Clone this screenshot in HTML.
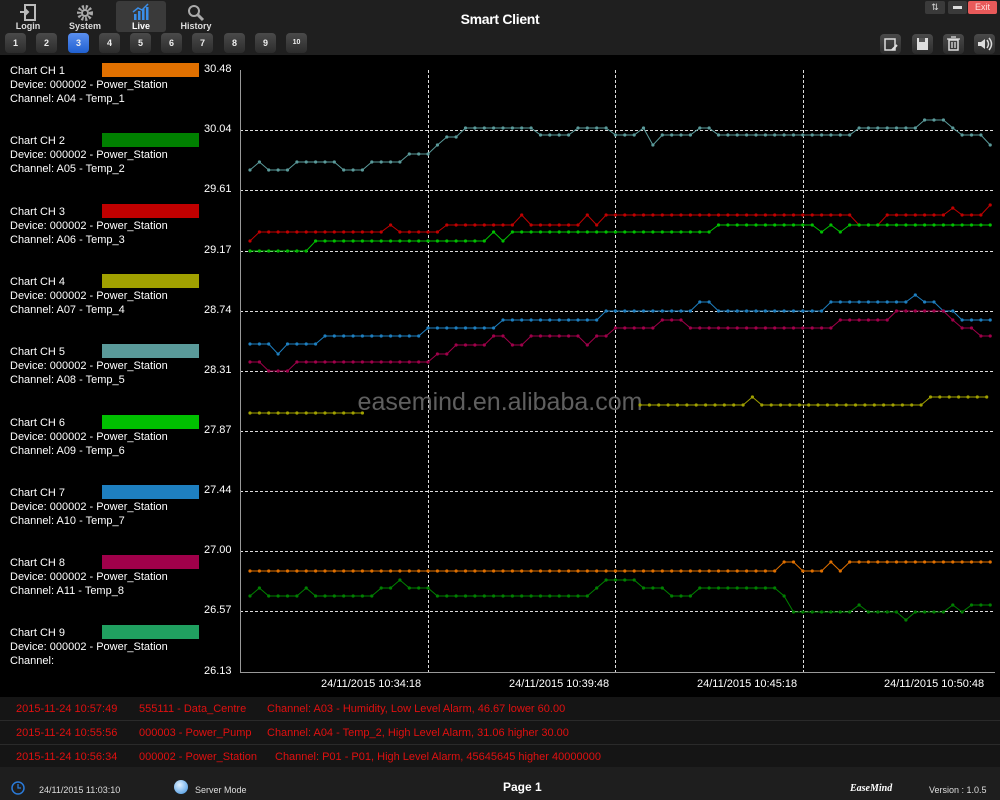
<!DOCTYPE html>
<html><head><meta charset="utf-8"><style>
*{margin:0;padding:0;box-sizing:border-box}
body{width:1000px;height:800px;background:#000;font-family:"Liberation Sans",sans-serif;position:relative;overflow:hidden;color:#fff}
.top{position:absolute;left:0;top:0;width:1000px;height:55px;background:#1f1f1f}
.nav{position:absolute;top:2px;width:50px;height:30px;text-align:center;font-size:9px;font-weight:bold;color:#ddd}
.nav span{position:absolute;left:0;right:0;bottom:1px}
.nb{position:absolute;top:33px;width:21px;height:20px;border-radius:4px;background:linear-gradient(#4a4a4a,#2c2c2c);font-size:9px;font-weight:bold;color:#eee;text-align:center;line-height:20px}
.tb{position:absolute;top:34px;width:21px;height:20px;border-radius:4px;background:linear-gradient(#4a4a4a,#2c2c2c)}
.leg{position:absolute;left:10px;font-size:11px;line-height:14px;color:#fff}
.bar{position:absolute;left:102px;width:97px;height:14px}
.yl{position:absolute;left:204px;font-size:11px;color:#fff}
.xl{position:absolute;top:678px;font-size:11px;color:#fff}
.al{position:absolute;left:0;width:1000px;height:24px;font-size:11px;color:#e01010;line-height:24px;border-bottom:1px solid #2a2a2a;background:#151515}
.al span{position:absolute}
.foot{position:absolute;left:0;top:767px;width:1000px;height:33px;background:#1e1e1e;font-size:9px;color:#ddd}
</style></head><body>
<div class="top">
 <div class="nav" style="left:3px"><svg width="20" height="18" viewBox="0 0 20 18" style="margin-top:2px"><rect x="7" y="1" width="10" height="15" fill="none" stroke="#bbb" stroke-width="2"/><path d="M2 8h8M7 5l3 3-3 3" stroke="#bbb" stroke-width="2" fill="none"/></svg><span>Login</span></div>
 <div class="nav" style="left:60px"><svg width="20" height="18" style="margin-top:2px"><circle cx="10" cy="9" r="6" fill="none" stroke="#aaa" stroke-width="4" stroke-dasharray="2 1.6"/><circle cx="10" cy="9" r="4" fill="#aaa"/><circle cx="10" cy="9" r="2" fill="#1f1f1f"/></svg><span>System</span></div>
 <div class="nav" style="left:116px;top:1px;height:31px;background:#3a3a3a;border-radius:3px"><svg width="20" height="18" style="margin-top:2px"><rect x="3" y="11" width="2.5" height="6" fill="#3a8ee8"/><rect x="7" y="8" width="2.5" height="9" fill="#3a8ee8"/><rect x="11" y="6" width="2.5" height="11" fill="#3a8ee8"/><rect x="15" y="4" width="2.5" height="13" fill="#3a8ee8"/><path d="M2 9l5-4 4 2 6-6" stroke="#3a8ee8" stroke-width="1.5" fill="none"/></svg><span style="color:#fff">Live</span></div>
 <div class="nav" style="left:171px"><svg width="20" height="18" style="margin-top:2px"><circle cx="8" cy="7" r="5" fill="none" stroke="#aaa" stroke-width="2"/><path d="M12 11l5 5" stroke="#aaa" stroke-width="3"/></svg><span>History</span></div>
 <div style="position:absolute;left:0;width:1000px;top:11px;text-align:center;font-size:14px;font-weight:bold;color:#fff;letter-spacing:-0.3px">Smart Client</div>
 <div style="position:absolute;left:925px;top:1px;width:20px;height:13px;background:#3a3a3a;border-radius:2px;font-size:9px;text-align:center;line-height:13px;color:#ddd">⇅</div>
 <div style="position:absolute;left:948px;top:1px;width:19px;height:13px;background:#3a3a3a;border-radius:2px"><div style="margin:5px 5px;height:3px;background:#ddd"></div></div>
 <div style="position:absolute;left:968px;top:1px;width:29px;height:13px;background:#e85a5a;border-radius:2px;font-size:9px;text-align:center;line-height:13px;color:#fdd">Exit</div>
 <div class="nb" style="left:5px">1</div><div class="nb" style="left:36px">2</div><div class="nb" style="left:68px;background:linear-gradient(#5a8ff0,#2060d0)">3</div><div class="nb" style="left:99px">4</div><div class="nb" style="left:130px">5</div><div class="nb" style="left:161px">6</div><div class="nb" style="left:192px">7</div><div class="nb" style="left:224px">8</div><div class="nb" style="left:255px">9</div><div class="nb" style="left:286px;font-size:7px">10</div>
 <div class="tb" style="left:880px"><svg width="21" height="20"><rect x="5" y="5" width="10" height="11" fill="none" stroke="#ddd" stroke-width="1.5"/><path d="M12 16l5-5" stroke="#ddd" stroke-width="2"/></svg></div>
 <div class="tb" style="left:912px"><svg width="21" height="20"><rect x="5" y="4" width="11" height="12" fill="#ddd"/><rect x="7" y="4" width="6" height="4" fill="#555"/></svg></div>
 <div class="tb" style="left:943px"><svg width="21" height="20"><rect x="6" y="6" width="9" height="10" fill="none" stroke="#ddd" stroke-width="1.5"/><path d="M4 5h13M8 3h5M9 8v6M12 8v6" stroke="#ddd" stroke-width="1.3"/></svg></div>
 <div class="tb" style="left:974px"><svg width="21" height="20"><path d="M4 8h3l4-3v10l-4-3H4z" fill="#ddd"/><path d="M13 6q3 4 0 8M15 4q5 6 0 12" stroke="#ddd" stroke-width="1.5" fill="none"/></svg></div>
</div>

<div id="legend"></div>
<div class="yl" style="top:63px">30.48</div><div class="yl" style="top:123px">30.04</div><div class="yl" style="top:183px">29.61</div><div class="yl" style="top:244px">29.17</div><div class="yl" style="top:304px">28.74</div><div class="yl" style="top:364px">28.31</div><div class="yl" style="top:424px">27.87</div><div class="yl" style="top:484px">27.44</div><div class="yl" style="top:544px">27.00</div><div class="yl" style="top:604px">26.57</div><div class="yl" style="top:665px">26.13</div>
<div class="xl" style="left:321px">24/11/2015 10:34:18</div><div class="xl" style="left:509px">24/11/2015 10:39:48</div><div class="xl" style="left:697px">24/11/2015 10:45:18</div><div class="xl" style="left:884px">24/11/2015 10:50:48</div>
<svg id="ch" width="1000" height="800" style="position:absolute;left:0;top:0">
<g stroke="#ddd" stroke-width="1" stroke-dasharray="3 2">
<line x1="240" y1="130.5" x2="995" y2="130.5"/><line x1="240" y1="190.5" x2="995" y2="190.5"/><line x1="240" y1="251.5" x2="995" y2="251.5"/><line x1="240" y1="311.5" x2="995" y2="311.5"/><line x1="240" y1="371.5" x2="995" y2="371.5"/><line x1="240" y1="431.5" x2="995" y2="431.5"/><line x1="240" y1="491.5" x2="995" y2="491.5"/><line x1="240" y1="551.5" x2="995" y2="551.5"/><line x1="240" y1="611.5" x2="995" y2="611.5"/>
<line x1="428.5" y1="70" x2="428.5" y2="672"/><line x1="615.5" y1="70" x2="615.5" y2="672"/><line x1="803.5" y1="70" x2="803.5" y2="672"/>
</g>
<line x1="240.5" y1="70" x2="240.5" y2="673" stroke="#999"/>
<line x1="240" y1="672.5" x2="995" y2="672.5" stroke="#999"/>
<text x="500" y="410" font-size="25" fill="#777" fill-opacity="0.8" text-anchor="middle" font-family="Liberation Sans">easemind.en.alibaba.com</text>
<g id="ser"></g>
</svg>
<div class="al" style="top:697px"><span style="left:16px">2015-11-24 10:57:49</span><span style="left:139px">555111 - Data_Centre</span><span style="left:267px">Channel: A03 - Humidity, Low Level Alarm, 46.67 lower 60.00</span></div>
<div class="al" style="top:721px"><span style="left:16px">2015-11-24 10:55:56</span><span style="left:139px">000003 - Power_Pump</span><span style="left:267px">Channel: A04 - Temp_2, High Level Alarm, 31.06 higher 30.00</span></div>
<div class="al" style="top:745px"><span style="left:16px">2015-11-24 10:56:34</span><span style="left:139px">000002 - Power_Station</span><span style="left:275px">Channel: P01 - P01, High Level Alarm, 45645645 higher 40000000</span></div>
<div class="foot">
 <svg width="16" height="16" style="position:absolute;left:10px;top:13px"><circle cx="8" cy="8" r="6" fill="none" stroke="#2a7ad8" stroke-width="1.5"/><path d="M8 4v4h3" stroke="#2a7ad8" stroke-width="1.3" fill="none"/></svg>
 <span style="position:absolute;left:39px;top:18px">24/11/2015 11:03:10</span>
 <div style="position:absolute;left:174px;top:13px;width:14px;height:14px;border-radius:50%;background:radial-gradient(circle at 40% 35%,#e0f0ff,#3a90e0)"></div>
 <span style="position:absolute;left:195px;top:18px">Server Mode</span>
 <span style="position:absolute;left:503px;top:13px;font-size:12px;font-weight:bold;color:#fff">Page 1</span>
 <span style="position:absolute;left:850px;top:16px;font-size:10px;font-style:italic;font-weight:bold;color:#fff;font-family:'Liberation Serif',serif">EaseMind</span>
 <span style="position:absolute;left:929px;top:18px">Version : 1.0.5</span>
</div>
<script>
var L=[["#e07000"],["#008000"],["#c00000"],["#a0a000"],["#5a9a9a"],["#00c000"],["#1e7fc0"],["#a0004a"],["#20a060"]];
var h="";
for(var i=0;i<9;i++){var t=64+i*70.3;
h+='<div class="leg" style="top:'+t+'px">Chart CH '+(i+1)+'<br>Device: 000002 - Power_Station<br>Channel:'+(i<8?' A'+('0'+(i+4)).slice(-2)+' - Temp_'+(i+1):'')+'</div><div class="bar" style="top:'+(t-1)+'px;background:'+L[i][0]+'"></div>';}
document.getElementById("legend").innerHTML=h;
var S=[
["#5a9a9a",[[255,170],[262,162],[295,170],[325,162],[332,170],[340,162],[365,170],[400,162],[430,154],[438,145],[455,137],[465,137],[535,128],[545,135],[572,135],[615,128],[635,135],[645,128],[653,145],[662,135],[695,135],[712,128],[720,135],[850,135],[858,120],[868,128],[920,128],[950,120],[962,128],[972,135],[982,135],[995,145]]],
["#c00000",[[252,241],[385,232],[392,225],[440,232],[520,225],[527,215],[585,225],[592,215],[602,225],[850,215],[860,225],[868,215],[878,225],[950,215],[958,208],[972,215],[982,215],[995,205]]],
["#00c000",[[315,251],[492,241],[500,232],[508,241],[700,232],[708,225],[718,232],[820,225],[830,232],[840,225],[848,232],[995,225]]],
["#1e7fc0",[[272,344],[280,354],[320,344],[420,336],[495,328],[605,320],[695,311],[712,302],[830,311],[910,302],[918,295],[940,302],[962,311],[995,320]]],
["#a0004a",[[262,362],[292,371],[430,362],[456,354],[492,345],[512,336],[522,345],[580,336],[590,345],[610,336],[660,328],[690,320],[775,328],[840,328],[890,320],[945,311],[962,320],[972,328],[995,336]]],
["#a0a000",[[365,413]]],
["#a0a000",[[750,405],[758,397],[925,405],[995,397]],640],
["#e07000",[[780,571],[787,562],[793,571],[800,562],[830,571],[838,562],[845,571],[995,562]]],
["#008000",[[252,596],[262,588],[302,596],[312,588],[372,596],[392,588],[400,580],[435,588],[590,596],[600,588],[635,580],[665,588],[695,596],[780,588],[792,596],[850,612],[862,605],[905,612],[915,620],[945,612],[955,605],[965,612],[995,605]]]
];
var g="";
S.forEach(function(s){var st=s[2]||250,pts=[];for(var x=st;x<=s[1][s[1].length-1][0]+0.1;x+=9.37){var y=s[1][s[1].length-1][1];for(var k=0;k<s[1].length;k++){if(x<=s[1][k][0]){y=s[1][k][1];break;}}pts.push(x.toFixed(1)+","+y);}
g+='<polyline points="'+pts.join(" ")+'" fill="none" stroke="'+s[0]+'" stroke-width="1"/>';
pts.forEach(function(p){var a=p.split(",");g+='<circle cx="'+a[0]+'" cy="'+a[1]+'" r="1.6" fill="'+s[0]+'"/>';});});
document.getElementById("ser").innerHTML=g;
</script>
</body></html>
